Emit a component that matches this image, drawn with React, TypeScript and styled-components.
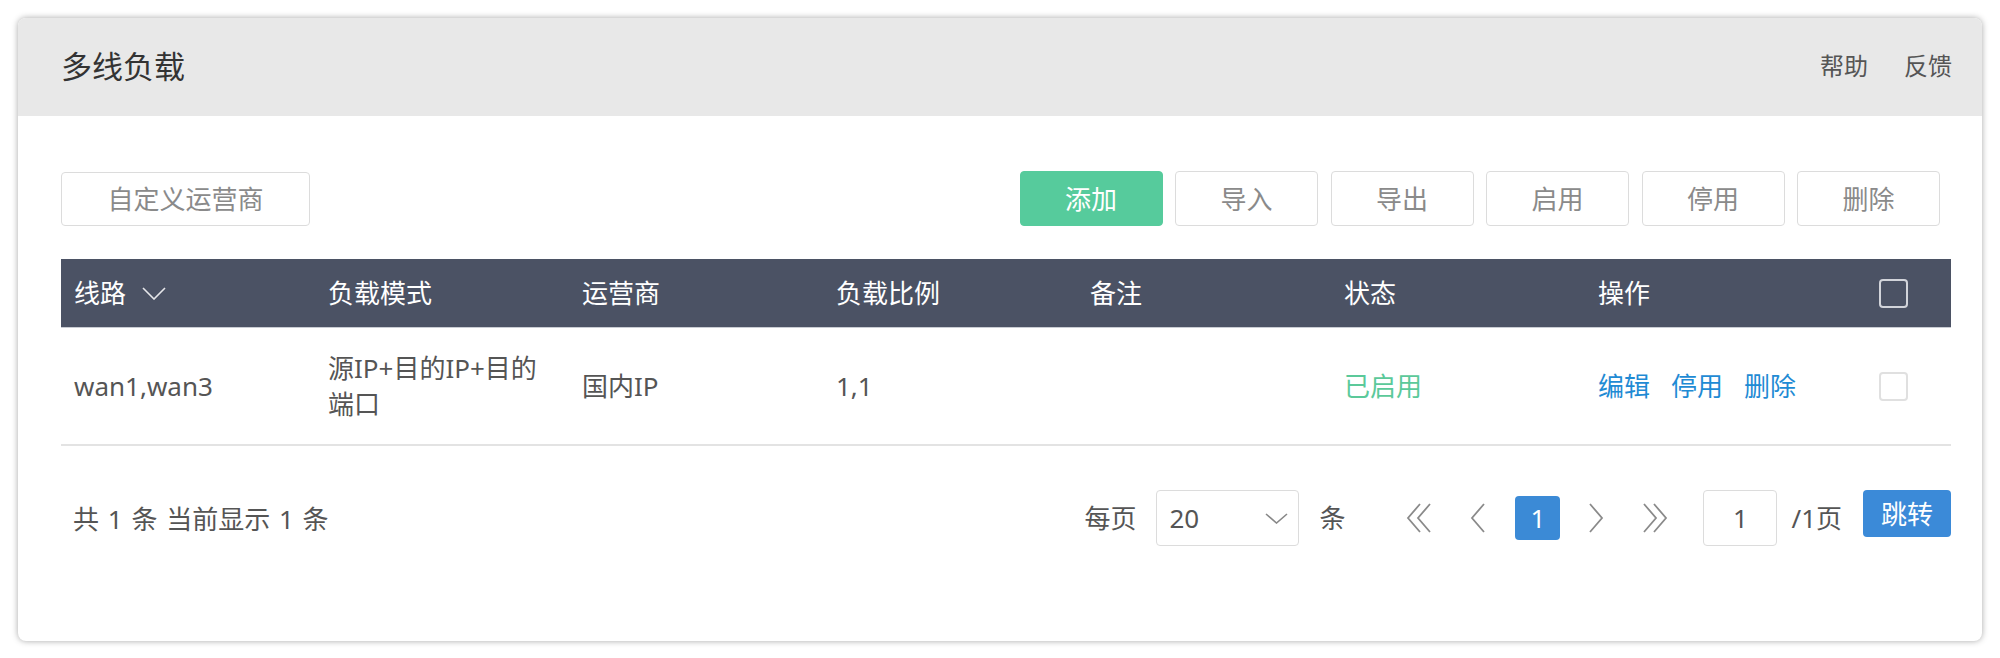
import React from "react";
import styled, { createGlobalStyle } from "styled-components";

const GlobalStyle = createGlobalStyle`
  html, body { margin: 0; padding: 0; background: #ffffff; }
  body {
    font-family: "Noto Sans", "Noto Sans CJK SC", sans-serif;
    color: #555;
  }
  * { box-sizing: border-box; }
`;

const Card = styled.div`
  margin: 18px;
  height: 623px;
  background: #fff;
  border-radius: 8px;
  box-shadow: 0 0 6px rgba(0, 0, 0, 0.35);
  overflow: hidden;
`;

const Header = styled.div`
  height: 98px;
  background: #e8e8e8;
  display: flex;
  align-items: center;
  justify-content: space-between;
  padding: 0 30px 2px 43px;
`;

const Title = styled.div`
  font-size: 31px;
  color: #333;
  line-height: 1;
`;

const HeaderLinks = styled.div`
  display: flex;
  gap: 36px;
  font-size: 24px;
  color: #555;
  line-height: 1;
`;

const Body = styled.div`
  padding: 0 31px 0 43px;
`;

const Toolbar = styled.div`
  margin-top: 55px;
  display: flex;
  justify-content: space-between;
  align-items: flex-start;
  padding-right: 11px;
`;

const ButtonGroup = styled.div`
  display: flex;
  gap: 12.5px;
`;

const Button = styled.button<{ $primary?: boolean; $wide?: boolean }>`
  width: ${(p) => (p.$wide ? "249px" : "143px")};
  height: ${(p) => (p.$wide ? "54px" : "55px")};
  margin-top: ${(p) => (p.$wide ? "1px" : "0")};
  border-radius: 4px;
  border: 1px solid ${(p) => (p.$primary ? "#56cb9c" : "#dcdcdc")};
  background: ${(p) => (p.$primary ? "#56cb9c" : "#fff")};
  color: ${(p) => (p.$primary ? "#fff" : "#8a8a8a")};
  font-family: inherit;
  font-size: 26px;
  line-height: 1;
  padding: 0;
  cursor: pointer;
`;

const Table = styled.div`
  margin-top: 33px;
`;

const cols = "repeat(7, 254px) 1fr";

const HeadRow = styled.div`
  display: grid;
  grid-template-columns: ${cols};
  height: 69px;
  align-items: center;
  background: #4b5264;
  border-bottom: 1px solid #c9ccd3;
`;

const HeadCell = styled.div`
  padding-left: 13px;
  color: #fff;
  font-size: 26px;
  line-height: 1;
  display: flex;
  align-items: center;
  gap: 16px;
`;

const DataRow = styled.div`
  display: grid;
  grid-template-columns: ${cols};
  min-height: 118px;
  align-items: center;
  border-bottom: 2px solid #e3e3e3;
`;

const Cell = styled.div<{ $color?: string }>`
  padding: 0 13px;
  font-size: 26px;
  line-height: 36px;
  color: ${(p) => p.$color || "#555"};
`;

const Links = styled.div`
  padding-left: 13px;
  display: flex;
  gap: 21px;
  font-size: 26px;
  line-height: 36px;
`;

const Link = styled.a`
  color: #1f8bd4;
  text-decoration: none;
  cursor: pointer;
`;

const CheckCell = styled.div`
  display: flex;
  justify-content: center;
  padding-right: 4px;
`;

const Check = styled.span<{ $dark?: boolean }>`
  width: 29px;
  height: 29px;
  border-radius: 4px;
  border: 2px solid ${(p) => (p.$dark ? "#d2d4da" : "#e0e0e0")};
  background: ${(p) => (p.$dark ? "transparent" : "#fff")};
  display: inline-block;
`;

const Pager = styled.div`
  margin-top: 44px;
  height: 56px;
  display: flex;
  align-items: center;
  justify-content: space-between;
`;

const Summary = styled.div`
  padding-left: 12px;
  font-size: 26px;
  color: #555;
  word-spacing: 2px;
`;

const PagerRight = styled.div`
  display: flex;
  align-items: center;
  font-size: 26px;
  color: #555;
`;

const Label = styled.span<{ $ml?: number }>`
  margin-left: ${(p) => p.$ml ?? 0}px;
  line-height: 1;
`;

const Select = styled.div`
  margin-left: 20px;
  width: 143px;
  height: 56px;
  border: 1px solid #dcdcdc;
  border-radius: 4px;
  display: flex;
  align-items: center;
  justify-content: space-between;
  padding: 0 10px 0 12px;
  color: #555;
`;

const Nav = styled.div`
  margin-left: 52px;
  display: flex;
  align-items: center;
  gap: 14px;
`;

const NavItem = styled.div<{ $active?: boolean }>`
  width: 45px;
  height: 44px;
  border-radius: 4px;
  display: flex;
  align-items: center;
  justify-content: center;
  background: ${(p) => (p.$active ? "#3b8ad6" : "transparent")};
  color: ${(p) => (p.$active ? "#fff" : "#888")};
  font-size: 26px;
  line-height: 1;
`;

const PageInput = styled.div`
  margin-left: 25px;
  width: 74px;
  height: 56px;
  border: 1px solid #dcdcdc;
  border-radius: 4px;
  display: flex;
  align-items: center;
  justify-content: center;
  color: #555;
`;

const JumpButton = styled.button`
  margin-left: 21px;
  width: 88px;
  height: 47px;
  margin-top: -9px;
  border: none;
  border-radius: 4px;
  background: #3b8ad8;
  color: #fff;
  font-family: inherit;
  font-size: 26px;
  line-height: 1;
  padding: 0;
`;

const Chevron = ({ color, w = 24, h = 13 }: { color: string; w?: number; h?: number }) => (
  <svg width={w} height={h} viewBox={`0 0 ${w} ${h}`} fill="none">
    <polyline points={`1,1 ${w / 2},${h - 1} ${w - 1},1`} stroke={color} strokeWidth="1.6" />
  </svg>
);

const Angle = ({ dir, double }: { dir: "l" | "r"; double?: boolean }) => {
  const w = double ? 28 : 18;
  const pts = (x0: number) =>
    dir === "l" ? `${x0 + 14},1 ${x0 + 2},15 ${x0 + 14},29` : `${x0 + 2},1 ${x0 + 14},15 ${x0 + 2},29`;
  return (
    <svg width={w} height={30} viewBox={`0 0 ${w} 30`} fill="none">
      <polyline points={pts(0)} stroke="#8a8a8a" strokeWidth="1.8" />
      {double && <polyline points={pts(10)} stroke="#8a8a8a" strokeWidth="1.8" />}
    </svg>
  );
};

export default function App() {
  return (
    <>
      <GlobalStyle />
      <Card>
        <Header>
          <Title>多线负载</Title>
          <HeaderLinks>
            <span>帮助</span>
            <span>反馈</span>
          </HeaderLinks>
        </Header>
        <Body>
          <Toolbar>
            <Button $wide>自定义运营商</Button>
            <ButtonGroup>
              <Button $primary>添加</Button>
              <Button>导入</Button>
              <Button>导出</Button>
              <Button>启用</Button>
              <Button>停用</Button>
              <Button>删除</Button>
            </ButtonGroup>
          </Toolbar>
          <Table>
            <HeadRow>
              <HeadCell>
                线路 <Chevron color="#e6e7ea" />
              </HeadCell>
              <HeadCell>负载模式</HeadCell>
              <HeadCell>运营商</HeadCell>
              <HeadCell>负载比例</HeadCell>
              <HeadCell>备注</HeadCell>
              <HeadCell>状态</HeadCell>
              <HeadCell>操作</HeadCell>
              <CheckCell>
                <Check $dark />
              </CheckCell>
            </HeadRow>
            <DataRow>
              <Cell>wan1,wan3</Cell>
              <Cell>源IP+目的IP+目的端口</Cell>
              <Cell>国内IP</Cell>
              <Cell>1,1</Cell>
              <Cell></Cell>
              <Cell $color="#5bc99a">已启用</Cell>
              <Links>
                <Link>编辑</Link>
                <Link>停用</Link>
                <Link>删除</Link>
              </Links>
              <CheckCell>
                <Check />
              </CheckCell>
            </DataRow>
          </Table>
          <Pager>
            <Summary>共 1 条 当前显示 1 条</Summary>
            <PagerRight>
              <Label>每页</Label>
              <Select>
                <span>20</span>
                <Chevron color="#888" w={23} h={11} />
              </Select>
              <Label $ml={20}>条</Label>
              <Nav>
                <NavItem>
                  <Angle dir="l" double />
                </NavItem>
                <NavItem>
                  <Angle dir="l" />
                </NavItem>
                <NavItem $active>1</NavItem>
                <NavItem>
                  <Angle dir="r" />
                </NavItem>
                <NavItem>
                  <Angle dir="r" double />
                </NavItem>
              </Nav>
              <PageInput>1</PageInput>
              <Label $ml={14}>/1页</Label>
              <JumpButton>跳转</JumpButton>
            </PagerRight>
          </Pager>
        </Body>
      </Card>
    </>
  );
}
